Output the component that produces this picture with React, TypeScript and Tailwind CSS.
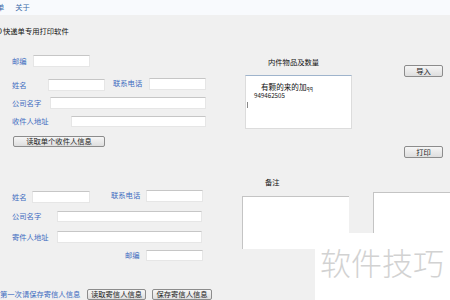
import React from 'react';

const font = { fontFamily: '"Noto Sans CJK SC", "Liberation Sans", sans-serif' };

function Label({ text, className = '' }: { text: string; className?: string }) {
  return <span className={`text-[7.3px] leading-[9px] text-[#3d6cc0] whitespace-nowrap ${className}`}>{text}</span>;
}

function Field({ className = '' }: { className?: string }) {
  return (
    <input
      readOnly
      className={`h-full bg-white border border-[#e6e6e6] border-t-[#c6c6c6] outline-none ${className}`}
    />
  );
}

function Btn({ text, className = '' }: { text: string; className?: string }) {
  return (
    <button
      className={`flex items-center justify-center bg-gradient-to-b from-[#f6f6f6] to-[#dedede] border border-[#8c8c8c] rounded-[2px] text-[7.3px] leading-[9px] text-[#222] whitespace-nowrap ${className}`}
    >
      {text}
    </button>
  );
}

export default function App() {
  return (
    <div className="relative w-[450px] h-[300px] overflow-hidden bg-[#f0f0f0] flex flex-col" style={font}>
      {/* menu */}
      <div className="h-[16px] bg-[#f8fafd] flex items-center text-[7.3px] text-[#3a6aaa]">
        <span className="-ml-[3px]">单</span>
        <span className="ml-[11px]">关于</span>
      </div>

      {/* title */}
      <div className="h-[34px] flex items-center text-[7.3px] text-[#111] whitespace-nowrap">
        <span className="-ml-[3px]">D</span>
        <span className="ml-[1px]">快递单专用打印软件</span>
      </div>

      <div className="flex">
        {/* left column */}
        <div className="w-[215px] flex flex-col">
          <div className="flex items-center h-[12px] mt-[7px]">
            <Label text="邮编" className="ml-[12px] w-[21px]" />
            <Field className="w-[57px]" />
          </div>
          <div className="flex items-center h-[12px] mt-[12px]">
            <Label text="姓名" className="ml-[12px] w-[36px]" />
            <Field className="w-[57px]" />
            <Label text="联系电话" className="ml-[8px] w-[36px] -mt-[4px]" />
            <Field className="w-[57px] -mt-[3px]" />
          </div>
          <div className="flex items-center h-[12px] mt-[6px]">
            <Label text="公司名字" className="ml-[12px] w-[38px]" />
            <Field className="w-[156px]" />
          </div>
          <div className="flex items-center h-[11px] mt-[7px]">
            <Label text="收件人地址" className="ml-[12px] w-[59px]" />
            <Field className="w-[135px]" />
          </div>
          <Btn text="读取单个收件人信息" className="ml-[13px] w-[92px] h-[11px] mt-[9px]" />

          <div className="flex items-center h-[12px] mt-[44px]">
            <Label text="姓名" className="ml-[12px] w-[20px]" />
            <Field className="w-[58px]" />
            <Label text="联系电话" className="ml-[21px] w-[35px] -mt-[3px]" />
            <Field className="w-[57px] -mt-[2px]" />
          </div>
          <div className="flex items-center h-[11px] mt-[8px]">
            <Label text="公司名字" className="ml-[12px] w-[45px]" />
            <Field className="w-[145px]" />
          </div>
          <div className="flex items-center h-[12px] mt-[9px]">
            <Label text="寄件人地址" className="ml-[12px] w-[45px]" />
            <Field className="w-[145px]" />
          </div>
          <div className="flex items-center h-[11px] mt-[7px]">
            <Label text="邮编" className="ml-[125px] w-[21px]" />
            <Field className="w-[57px]" />
          </div>
          <div className="flex items-center h-[11px] mt-[28px]">
            <Label text="第一次请保存寄信人信息" className="w-[87px]" />
            <Btn text="读取寄信人信息" className="w-[59px] h-[11px]" />
            <Btn text="保存寄信人信息" className="ml-[6px] w-[60px] h-[11px]" />
          </div>
        </div>

        {/* right column */}
        <div className="flex-1 flex flex-col">
          <div className="flex h-[110px]">
            <div className="w-[189px] flex flex-col">
              <span className="ml-[53px] mt-[10px] text-[7.3px] leading-[9px] text-[#111] whitespace-nowrap">内件物品及数量</span>
              <div className="ml-[30px] mt-[8px] w-[107px] h-[54px] bg-white border border-[#dcdcdc] border-t-[#9fb4cc] flex flex-col">
                <div className="ml-[15px] mt-[6px] flex items-end text-[#111] leading-[9px]">
                  <span className="text-[7.6px]">有颗的来的加</span>
                  <span className="text-[5px] leading-[7px]">qq</span>
                </div>
                <div className="ml-[8px] mt-[1px] text-[6.2px] leading-[7px] text-[#111]">949462505</div>
                <div className="ml-[1px] mt-[3px] w-[1px] h-[6px] bg-[#888]" />
              </div>
            </div>
            <div className="w-[39px] flex flex-col">
              <Btn text="导入" className="mt-[17px] h-[12px] w-[39px]" />
              <Btn text="打印" className="mt-[69px] h-[12px] w-[39px]" />
            </div>
          </div>

          <span className="ml-[50px] mt-[20px] text-[7.3px] leading-[9px] text-[#111]">备注</span>
          <div className="flex items-start mt-[5px]">
            <div className="ml-[27px] mt-[4px] w-[107px] h-[53px] bg-white border-t border-l border-[#c4c4c4]" />
            <div className="ml-[24px] w-[77px] h-[106px] bg-white border-t border-l border-[#c4c4c4]" />
          </div>
        </div>
      </div>

      {/* watermark */}
      <div className="absolute left-[315px] top-[233px] w-[135px] h-[67px] bg-white flex items-start">
        <span className="ml-[5px] mt-[12px] text-[31px] leading-[34px] font-light text-[#d2d2d2] whitespace-nowrap">软件技巧</span>
      </div>
    </div>
  );
}
